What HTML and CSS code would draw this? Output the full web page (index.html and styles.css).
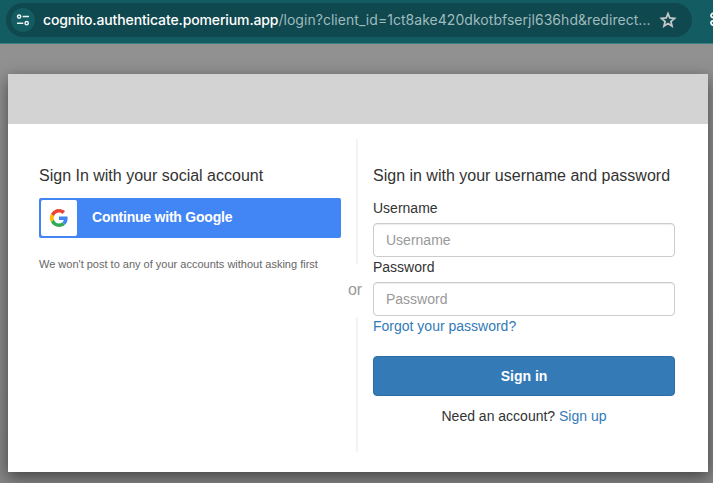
FILE: index.html
```html
<!DOCTYPE html>
<html lang="en">
<head>
<meta charset="utf-8">
<title>Sign in</title>
<link rel="stylesheet" href="styles.css">
</head>
<body>
<header class="toolbar">
  <div class="omnibox">
    <span class="site-info">
      <svg width="14" height="14" viewBox="0 0 14 14" fill="none" stroke="#e8f3f4" stroke-width="1.5"><circle cx="3.1" cy="3.6" r="1.6"/><path d="M6.600 3.600H13M1 10.200h6.300"/><circle cx="10.700" cy="10.200" r="1.600"/></svg>
    </span>
    <span class="url"><span class="host">cognito.authenticate.pomerium.app</span><span class="path">/login?client_id=1ct8ake420dkotbfserjl636hd&amp;redirect...</span></span>
    <svg class="star" width="18" height="18" viewBox="0 0 18 18" fill="none" stroke="#c3c8c6" stroke-width="1.8"><path d="M9 2.700l1.800 4.300 4.700.4-3.600 3.100 1.100 4.600L9 12.600l-4 2.500 1.100-4.600L2.500 7.400l4.700-.4z"/></svg>
  </div>
  <svg class="extension" width="16" height="16" viewBox="0 0 16 16" fill="none" stroke="#e8f3f4" stroke-width="1.8"><circle cx="3" cy="3.500" r="2"/><circle cx="3" cy="11" r="2"/><path d="M5 5l8 8M5 10l8-8"/></svg>
</header>
<main class="backdrop">
  <section class="modal">
    <div class="banner"></div>
    <div class="content">
      <div class="social">
        <h1 class="title">Sign In with your social account</h1>
        <button class="google">
          <span class="google-icon">
            <svg width="18" height="18" viewBox="0 0 48 48"><path fill="#ea4335" d="M24 9.500c3.500 0 6.700 1.200 9.200 3.600l6.900-6.900C35.900 2.400 30.500 0 24 0 14.600 0 6.500 5.400 2.600 13.200l8 6.200C12.400 13.700 17.700 9.500 24 9.500z"/><path fill="#4285f4" d="M47 24.600c0-1.600-.2-3.100-.4-4.600H24v9h12.900c-.6 3-2.300 5.500-4.800 7.200l7.700 6C44.400 38 47 31.800 47 24.600z"/><path fill="#fbbc05" d="M10.500 28.600a14.500 14.500 0 0 1 0-9.200l-8-6.200a24 24 0 0 0 0 21.600z"/><path fill="#34a853" d="M24 48c6.500 0 11.900-2.100 15.900-5.800l-7.700-6c-2.200 1.500-4.900 2.300-8.200 2.300-6.300 0-11.600-4.200-13.500-9.900l-8 6.200C6.500 42.600 14.600 48 24 48z"/></svg>
          </span>
          <span class="google-text">Continue with Google</span>
        </button>
        <p class="note">We won't post to any of your accounts without asking first</p>
      </div>
      <div class="divider"><span class="line line-top"></span><span class="or">or</span><span class="line line-bottom"></span></div>
      <form class="login">
        <h1 class="title">Sign in with your username and password</h1>
        <label class="label user-label" for="user">Username</label>
        <input class="field" id="user" type="text" placeholder="Username">
        <label class="label pass-label" for="pass">Password</label>
        <input class="field" id="pass" type="password" placeholder="Password">
        <a class="link forgot">Forgot your password?</a>
        <button class="submit" type="button">Sign in</button>
        <p class="signup"><span>Need an account?</span> <a class="link">Sign up</a></p>
      </form>
    </div>
  </section>
</main>
</body>
</html>
```
FILE: styles.css
```css
* { box-sizing: border-box; }
body {
  margin: 0;
  width: 713px;
  height: 483px;
  overflow: hidden;
  font: 14px/20px "Liberation Sans", Arial, sans-serif;
  color: #333;
}
h1, p { margin: 0; font-weight: 400; }
button, input { font-family: inherit; }
.toolbar {
  display: flex;
  height: 44px;
  padding: 3px 0 0 6px;
  background: #135c61;
  border-bottom: 1px solid #3c8085;
  overflow: hidden;
}
.omnibox {
  display: flex;
  align-items: center;
  flex: none;
  width: 686px;
  height: 34px;
  padding-left: 5px;
  border-radius: 17px;
  background: #10484f;
}
.site-info {
  display: flex;
  align-items: center;
  justify-content: center;
  width: 24px;
  height: 24px;
  border-radius: 50%;
  background: #135c61;
}
.url {
  display: flex;
  flex: none;
  width: 608px;
  margin-left: 8px;
  font: 14px/20px Inter, sans-serif;
  white-space: nowrap;
}
.host { color: #fff; font-weight: 500; letter-spacing: -0.125px; }
.path { color: #9fbbbd; letter-spacing: 0.04px; }
.star { margin-left: 8px; }
.extension { flex: none; margin: 9px 0 0 18px; }
.backdrop {
  height: 439px;
  padding: 30px 0 0 8px;
  background: linear-gradient(#919191, #858585);
}
.modal {
  width: 700px;
  height: 398px;
  background: #fff;
  box-shadow: 0 5px 15px rgba(0, 0, 0, .5);
}
.banner { height: 50px; background: #d3d3d3; }
.content { display: flex; height: 348px; padding: 15px 33px 0 31px; }
.social { width: 302px; padding-top: 26px; }
.title { font-size: 16px; line-height: 22px; white-space: nowrap; }
.google {
  display: flex;
  align-items: center;
  width: 302px;
  height: 40px;
  margin-top: 11px;
  padding: 0 2px;
  border: 0;
  border-radius: 2px;
  background: #4285f4;
  color: #fff;
}
.google-icon {
  display: flex;
  align-items: center;
  justify-content: center;
  width: 36px;
  height: 36px;
  border-radius: 2px;
  background: #fff;
}
.google-text { margin-left: 15px; padding-bottom: 2px; font-size: 14px; font-weight: 700; letter-spacing: -0.22px; }
.note { margin-top: 16px; font-size: 11px; color: #666; white-space: nowrap; }
.divider {
  display: flex;
  flex-direction: column;
  align-items: center;
  width: 32px;
  height: 313px;
}
.line { width: 2px; background: #f3f3f3; }
.line-top { height: 125px; }
.line-bottom { height: 135px; }
.or { width: 20px; height: 53px; margin-right: 4px; padding-top: 16px; font-size: 16px; color: #999; text-align: center; }
.login { display: flex; flex-direction: column; width: 302px; padding-top: 26px; }
.label { height: 20px; }
.user-label { margin: 11px 0 5px; }
.pass-label { margin: 0 0 5px; }
.field {
  width: 302px;
  height: 34px;
  padding: 6px 12px;
  border: 1px solid #ccc;
  border-radius: 4px;
  background: #fff;
  box-shadow: inset 0 1px 1px rgba(0, 0, 0, .075);
  font-size: 14px;
}
.field::placeholder { color: #999; }
.link { color: #337ab7; }
.forgot { align-self: flex-start; }
.submit {
  height: 40px;
  margin-top: 20px;
  border: 1px solid #2e6da4;
  border-radius: 4px;
  background: #337ab7;
  color: #fff;
  font-size: 14px;
  font-weight: 700;
}
.signup { margin-top: 10px; text-align: center; }
```
